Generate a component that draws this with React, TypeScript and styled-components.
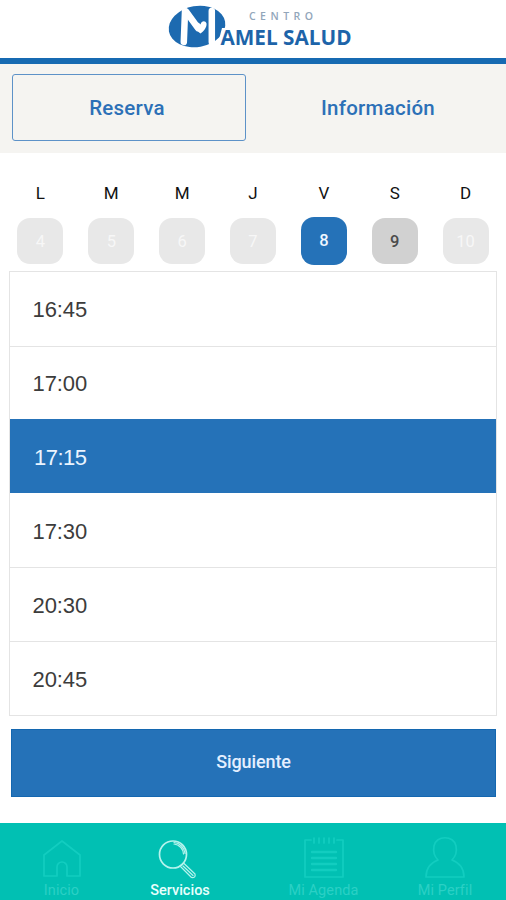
import React from "react";
import styled, { createGlobalStyle } from "styled-components";

const GlobalStyle = createGlobalStyle`
  * { box-sizing: border-box; }
  body { margin: 0; background: #fff; font-family: Roboto, "Liberation Sans", sans-serif; }
  button { font: inherit; border: 0; padding: 0; background: none; }
`;

const Screen = styled.div`
  width: 506px;
  height: 900px;
  display: flex;
  flex-direction: column;
  overflow: hidden;
`;

const Header = styled.header`
  height: 64px;
  flex: none;
  padding-left: 165px;
  border-bottom: 6px solid #166ab2;
`;

const LogoArt = styled.svg`
  display: block;
  overflow: visible;
`;

const Tabs = styled.nav`
  height: 89px;
  flex: none;
  display: grid;
  grid-template-columns: 234px 1fr;
  column-gap: 6px;
  padding: 10px 0 12px 12px;
  background: #f5f4f1;
`;

const Tab = styled.button<{ $active?: boolean }>`
  border: 1.5px solid ${(p) => (p.$active ? "#5d92c8" : "transparent")};
  border-radius: 3px;
  color: #2c70b7;
  font-size: 20.5px;
  font-weight: 500;
  letter-spacing: 0.25px;
  line-height: 24px;
  padding: 1px ${(p) => (p.$active ? 4 : 2)}px 0 0;
`;

const Week = styled.section`
  flex: none;
  height: 118px;
  padding: 30px 5px 0;
  display: grid;
  grid-template-columns: repeat(7, 1fr);
`;

const Day = styled.div`
  display: flex;
  flex-direction: column;
  align-items: center;
  color: #111;
  font-size: 17px;
  line-height: 20px;
`;

type DayState = "off" | "selected" | "open";

const dayColours: Record<DayState, string> = {
  off: "background: #e8e8e8; color: #f7f7f7;",
  selected: "background: #2572b8; color: #eef6ff; font-weight: 500;",
  open: "background: #d1d1d1; color: #4c4c4c; font-weight: 500;",
};

const DayButton = styled.button<{ $state: DayState }>`
  width: 46px;
  height: ${(p) => (p.$state === "selected" ? 48 : 46)}px;
  margin-top: ${(p) => (p.$state === "selected" ? 14 : 15)}px;
  padding-top: ${(p) => (p.$state === "selected" ? 0 : 2)}px;
  border-radius: 13px;
  font-size: 16.5px;
  ${(p) => dayColours[p.$state]}
`;

const Slots = styled.ul`
  flex: none;
  list-style: none;
  margin: 0 9px;
  padding: 0;
  height: 445px;
  display: grid;
  grid-template-rows: 75px 73px repeat(3, 74px) 1fr;
  border: 1.5px solid #e4e4e4;
`;

const Slot = styled.li<{ $selected?: boolean }>`
  display: flex;
  align-items: center;
  padding: 2px 0 0 ${(p) => (p.$selected ? 24 : 22.5)}px;
  border-bottom: 1.5px solid ${(p) => (p.$selected ? "#fff" : "#e4e4e4")};
  &:last-child { border-bottom: 0; }
  font-family: "Liberation Sans", sans-serif;
  font-size: 22px;
  letter-spacing: ${(p) => (p.$selected ? "-0.5px" : "-0.1px")};
  color: ${(p) => (p.$selected ? "#eaf4ff" : "#3c3c3c")};
  ${(p) => p.$selected && "background: #2572b8; background-clip: padding-box; margin-top: -1px; padding-top: 4px;"}
`;

const NextButton = styled.button`
  flex: none;
  height: 68px;
  margin: 13px 10px 26px 11px;
  background: #2572b8;
  border: 1px solid #1467b0;
  color: #e4efff;
  font-size: 18px;
  font-weight: 500;
  letter-spacing: -0.1px;
  padding-bottom: 4px;
`;

const BottomBar = styled.nav`
  flex: none;
  height: 77px;
  display: grid;
  grid-template-columns: 123px 114px 173px 70px 26px;
  padding-top: 13px;
  background: #01c0b3;
`;

const BottomItem = styled.a<{ $active?: boolean }>`
  display: flex;
  flex-direction: column;
  align-items: center;
  color: ${(p) => (p.$active ? "#e7fffc" : "#2bd0c5")};
  font-size: 14.5px;
  line-height: 18px;
  white-space: nowrap;
  font-weight: ${(p) => (p.$active ? 500 : 400)};
  letter-spacing: ${(p) => (p.$active ? "0" : "0.1px")};
  svg {
    display: block;
    height: 46px;
    fill: none;
    stroke: ${(p) => (p.$active ? "#b5f3ed" : "#12cdc0")};
    stroke-width: 1.7;
    stroke-linejoin: round;
    stroke-linecap: round;
  }
`;

function Logo() {
  return (
    <LogoArt width="196" height="57" viewBox="0 0 196 57" role="img" aria-label="Centro Mamel Salud">
      <ellipse cx="32" cy="26.5" rx="28.5" ry="20.5" transform="rotate(-10 32 26.5)" fill="#1d6ab0" />
      <path d="M20 11.5 L18.8 42 M46.8 11 V42" fill="none" stroke="#fff" strokeWidth="6.5" strokeLinecap="round" />
      <path d="M21 11.5 L33 28" fill="none" stroke="#fff" strokeWidth="6.5" strokeLinecap="round" />
      <path d="M35.5 33.5 C32 31 29 28 30 25 C31 22 34 22 35.5 24.5 C36.5 20.5 40.5 20.5 41.5 23.5 C42 27 39 31 35.5 33.5Z" fill="#fff" />
      <path d="M52 47 L57 28 H62 L64 47Z" fill="#fff" />
      <text x="84" y="20" textLength="64" fontFamily="Open Sans, sans-serif" fontSize="10.5" fontWeight="600" fill="#92a6ba">CENTRO</text>
      <text x="55.5" y="44.8" textLength="131" lengthAdjust="spacingAndGlyphs" fontFamily="Open Sans, sans-serif" fontWeight="700" fontSize="22" fill="#1d64a9">AMEL SALUD</text>
    </LogoArt>
  );
}

const HomeIcon = () => (
  <svg width="40" viewBox="0 0 40 46">
    <path d="M2 19 L20 5 L38 19 V40 H25 V31 a5 5 0 0 0-10 0 V40 H2Z" />
  </svg>
);

const SearchIcon = () => (
  <svg width="46" viewBox="0 0 46 46">
    <circle cx="16" cy="18.5" r="13.5" />
    <path d="M17 8 a10.5 10.5 0 0 1 9.5 10 M17 6.5 a12 12 0 0 1 11 11 M23 30 L26.5 27 L38 38 Q39 42 34.5 41.5Z M26 30 L36 39.5" strokeWidth="1.2" />
  </svg>
);

const AgendaIcon = () => (
  <svg width="40" viewBox="0 0 40 46">
    <path d="M7 4 H1 V41 H39 V4 H33 M10 2 V7 M15 2 V7 M20 2 V7 M25 2 V7 M30 2 V7" />
    <path d="M8 16 H32 M8 22 H32 M8 28 H32 M8 34 H32" strokeWidth="2.4" />
  </svg>
);

const ProfileIcon = () => (
  <svg width="42" viewBox="0 0 42 46">
    <path d="M14 24 C10 20 9 15 10 10 C12 -1 30 -1 32 10 C33 15 32 20 28 24 C36 27 40 32 40 41 H2 C2 32 6 27 14 24Z" />
  </svg>
);

const days: { name: string; date: number; state: DayState }[] = [
  { name: "L", date: 4, state: "off" },
  { name: "M", date: 5, state: "off" },
  { name: "M", date: 6, state: "off" },
  { name: "J", date: 7, state: "off" },
  { name: "V", date: 8, state: "selected" },
  { name: "S", date: 9, state: "open" },
  { name: "D", date: 10, state: "off" },
];

const slots = ["16:45", "17:00", "17:15", "17:30", "20:30", "20:45"];

export default function App() {
  return (
    <>
      <GlobalStyle />
      <Screen>
        <Header><Logo /></Header>
        <Tabs>
          <Tab $active>Reserva</Tab>
          <Tab>Información</Tab>
        </Tabs>
        <Week>
          {days.map((d) => (
            <Day key={d.date}>
              {d.name}
              <DayButton $state={d.state}>{d.date}</DayButton>
            </Day>
          ))}
        </Week>
        <Slots>
          {slots.map((s) => (
            <Slot key={s} $selected={s === "17:15"}>{s}</Slot>
          ))}
        </Slots>
        <NextButton>Siguiente</NextButton>
        <BottomBar>
          <BottomItem><HomeIcon />Inicio</BottomItem>
          <BottomItem $active><SearchIcon />Servicios</BottomItem>
          <BottomItem><AgendaIcon />Mi Agenda</BottomItem>
          <BottomItem><ProfileIcon />Mi Perfil</BottomItem>
        </BottomBar>
      </Screen>
    </>
  );
}
